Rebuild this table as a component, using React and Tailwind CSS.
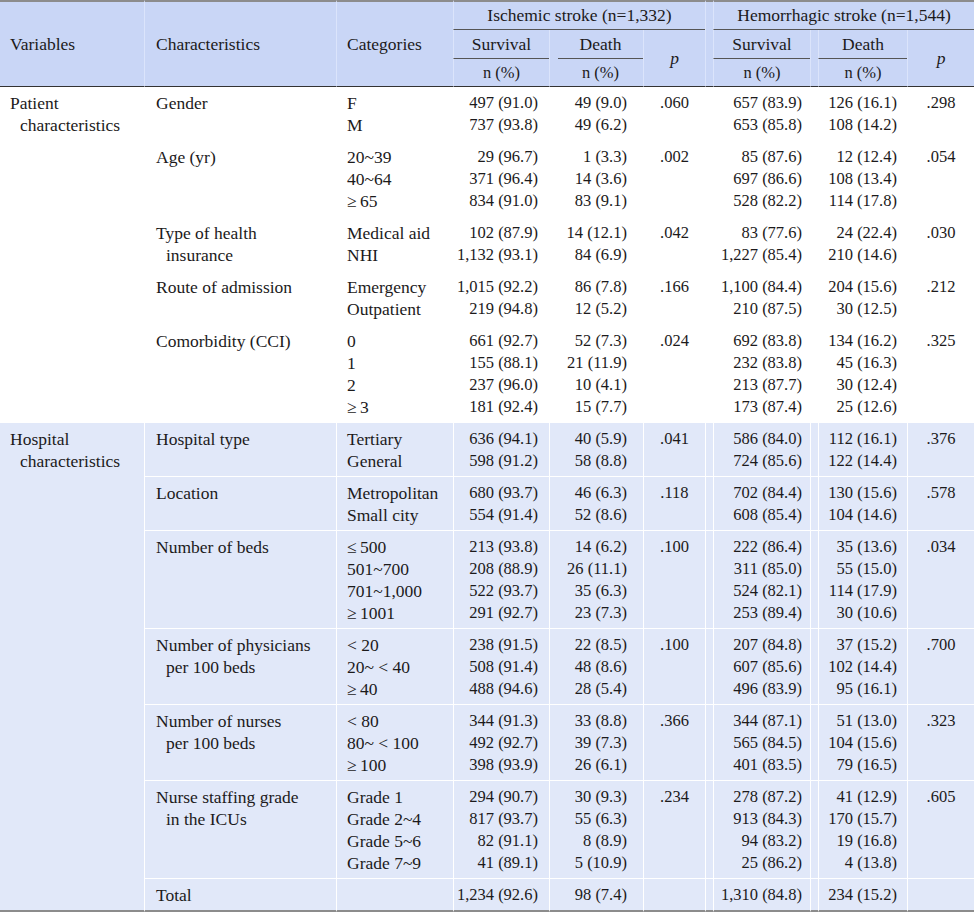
const patient = [
  { label: ["Gender"], cats: ["F", "M"], is: ["497 (91.0)", "737 (93.8)"], id: ["49 (9.0)", "49 (6.2)"], ip: ".060", hs: ["657 (83.9)", "653 (85.8)"], hd: ["126 (16.1)", "108 (14.2)"], hp: ".298" },
  { label: ["Age (yr)"], cats: ["20~39", "40~64", "≥\u200965"], is: ["29 (96.7)", "371 (96.4)", "834 (91.0)"], id: ["1 (3.3)", "14 (3.6)", "83 (9.1)"], ip: ".002", hs: ["85 (87.6)", "697 (86.6)", "528 (82.2)"], hd: ["12 (12.4)", "108 (13.4)", "114 (17.8)"], hp: ".054" },
  { label: ["Type of health", "insurance"], cats: ["Medical aid", "NHI"], is: ["102 (87.9)", "1,132 (93.1)"], id: ["14 (12.1)", "84 (6.9)"], ip: ".042", hs: ["83 (77.6)", "1,227 (85.4)"], hd: ["24 (22.4)", "210 (14.6)"], hp: ".030" },
  { label: ["Route of admission"], cats: ["Emergency", "Outpatient"], is: ["1,015 (92.2)", "219 (94.8)"], id: ["86 (7.8)", "12 (5.2)"], ip: ".166", hs: ["1,100 (84.4)", "210 (87.5)"], hd: ["204 (15.6)", "30 (12.5)"], hp: ".212" },
  { label: ["Comorbidity (CCI)"], cats: ["0", "1", "2", "≥\u20093"], is: ["661 (92.7)", "155 (88.1)", "237 (96.0)", "181 (92.4)"], id: ["52 (7.3)", "21 (11.9)", "10 (4.1)", "15 (7.7)"], ip: ".024", hs: ["692 (83.8)", "232 (83.8)", "213 (87.7)", "173 (87.4)"], hd: ["134 (16.2)", "45 (16.3)", "30 (12.4)", "25 (12.6)"], hp: ".325" },
];

const hospital = [
  { label: ["Hospital type"], cats: ["Tertiary", "General"], is: ["636 (94.1)", "598 (91.2)"], id: ["40 (5.9)", "58 (8.8)"], ip: ".041", hs: ["586 (84.0)", "724 (85.6)"], hd: ["112 (16.1)", "122 (14.4)"], hp: ".376" },
  { label: ["Location"], cats: ["Metropolitan", "Small city"], is: ["680 (93.7)", "554 (91.4)"], id: ["46 (6.3)", "52 (8.6)"], ip: ".118", hs: ["702 (84.4)", "608 (85.4)"], hd: ["130 (15.6)", "104 (14.6)"], hp: ".578" },
  { label: ["Number of beds"], cats: ["≤\u2009500", "501~700", "701~1,000", "≥\u20091001"], is: ["213 (93.8)", "208 (88.9)", "522 (93.7)", "291 (92.7)"], id: ["14 (6.2)", "26 (11.1)", "35 (6.3)", "23 (7.3)"], ip: ".100", hs: ["222 (86.4)", "311 (85.0)", "524 (82.1)", "253 (89.4)"], hd: ["35 (13.6)", "55 (15.0)", "114 (17.9)", "30 (10.6)"], hp: ".034" },
  { label: ["Number of physicians", "per 100 beds"], cats: ["< 20", "20~ < 40", "≥\u200940"], is: ["238 (91.5)", "508 (91.4)", "488 (94.6)"], id: ["22 (8.5)", "48 (8.6)", "28 (5.4)"], ip: ".100", hs: ["207 (84.8)", "607 (85.6)", "496 (83.9)"], hd: ["37 (15.2)", "102 (14.4)", "95 (16.1)"], hp: ".700" },
  { label: ["Number of nurses", "per 100 beds"], cats: ["< 80", "80~ < 100", "≥\u2009100"], is: ["344 (91.3)", "492 (92.7)", "398 (93.9)"], id: ["33 (8.8)", "39 (7.3)", "26 (6.1)"], ip: ".366", hs: ["344 (87.1)", "565 (84.5)", "401 (83.5)"], hd: ["51 (13.0)", "104 (15.6)", "79 (16.5)"], hp: ".323" },
  { label: ["Nurse staffing grade", "in the ICUs"], cats: ["Grade 1", "Grade 2~4", "Grade 5~6", "Grade 7~9"], is: ["294 (90.7)", "817 (93.7)", "82 (91.1)", "41 (89.1)"], id: ["30 (9.3)", "55 (6.3)", "8 (8.9)", "5 (10.9)"], ip: ".234", hs: ["278 (87.2)", "913 (84.3)", "94 (83.2)", "25 (86.2)"], hd: ["41 (12.9)", "170 (15.7)", "19 (16.8)", "4 (13.8)"], hp: ".605" },
  { label: ["Total"], cats: [], is: ["1,234 (92.6)"], id: ["98 (7.4)"], ip: "", hs: ["1,310 (84.8)"], hd: ["234 (15.2)"], hp: "" },
];

function Lines({ items, indent }) {
  return items.map((t, i) => (
    <div key={i} className={i > 0 && indent ? "pl-[10px]" : ""}>
      {t}
    </div>
  ));
}

function GroupRow({ g, first, section, rows, last, closing }) {
  const b = last
    ? "border-b-2 border-b-[#8c8c8c] pb-[4px]"
    : "border-b border-b-white pb-[4px]";
  const cell = `align-top pt-[5px] border-l border-l-white ${b}`;
  const num = `${cell} text-right text-[16.5px]`;
  return (
    <tr>
      {first && (
        <td
          rowSpan={rows}
          className={`align-top pt-[5px] pl-[10px] ${
            closing ? "border-b-2 border-b-[#8c8c8c]" : "border-b border-b-white"
          }`}
        >
          <Lines items={section} indent />
        </td>
      )}
      <td className={`${cell} pl-[11px]`}>
        <Lines items={g.label} indent />
      </td>
      <td className={`${cell} pl-[10px]`}>
        <Lines items={g.cats} />
      </td>
      <td className={`${num} pr-[11px]`}>
        <Lines items={g.is} />
      </td>
      <td className={`${num} pr-[16px]`}>
        <Lines items={g.id} />
      </td>
      <td className={`${cell} text-center text-[16.5px]`}>{g.ip}</td>
      <td className={cell}></td>
      <td className={`${num} pr-[8px]`}>
        <Lines items={g.hs} />
      </td>
      <td className={cell}></td>
      <td className={`${num} pr-[10px]`}>
        <Lines items={g.hd} />
      </td>
      <td className={`${cell} text-center text-[16.5px]`}>{g.hp}</td>
    </tr>
  );
}

export default function App() {
  const hl = "border-l border-l-[#dbe4fb]";
  const top = "border-t-2 border-t-[#8c8c8c]";
  const bot = "border-b border-b-[#333333]";
  const mid = "border-b border-b-[#555555]";

  return (
    <div className="w-[974px] bg-white text-[#1c1a1b] font-['Liberation_Serif',serif] text-[17.5px] leading-[22px]">
      <table className="w-[974px] table-fixed border-separate border-spacing-0">
        <colgroup>
          <col className="w-[144px]" />
          <col className="w-[192px]" />
          <col className="w-[117px]" />
          <col className="w-[96px]" />
          <col className="w-[94px]" />
          <col className="w-[62px]" />
          <col className="w-[8px]" />
          <col className="w-[97px]" />
          <col className="w-[8px]" />
          <col className="w-[89px]" />
          <col className="w-[67px]" />
        </colgroup>
        <thead className="bg-[#c9d6f6]">
          <tr>
            <th rowSpan={3} className={`${top} ${bot} text-left font-normal pl-[10px] align-middle`}>
              Variables
            </th>
            <th rowSpan={3} className={`${top} ${bot} ${hl} text-left font-normal pl-[11px] align-middle`}>
              Characteristics
            </th>
            <th rowSpan={3} className={`${top} ${bot} ${hl} text-left font-normal pl-[10px] align-middle`}>
              Categories
            </th>
            <th colSpan={3} className={`${top} ${mid} ${hl} font-normal text-center leading-[27px]`}>
              Ischemic stroke (n=1,332)
            </th>
            <th rowSpan={3} className={`${top} ${bot} ${hl}`}></th>
            <th colSpan={4} className={`${top} ${mid} ${hl} font-normal text-center leading-[27px]`}>
              Hemorrhagic stroke (n=1,544)
            </th>
          </tr>
          <tr>
            <th className={`${hl} ${mid} font-normal text-center leading-[28px]`}>Survival</th>
            <th className={`${hl} font-normal p-0`}>
              <div className={`ml-[8px] ${mid} text-center leading-[28px]`}>Death</div>
            </th>
            <th rowSpan={2} className={`${hl} ${bot} font-normal italic text-center align-middle`}>
              p
            </th>
            <th className={`${hl} ${mid} font-normal text-center leading-[28px]`}>Survival</th>
            <th rowSpan={2} className={`${hl} ${bot}`}></th>
            <th className={`${hl} ${mid} font-normal text-center leading-[28px]`}>Death</th>
            <th rowSpan={2} className={`${hl} ${bot} font-normal italic text-center align-middle`}>
              p
            </th>
          </tr>
          <tr>
            <th className={`${hl} ${bot} font-normal text-center leading-[27px] text-[16.5px]`}>n (%)</th>
            <th className={`${hl} ${bot} font-normal text-center leading-[27px] text-[16.5px] pl-[8px]`}>n (%)</th>
            <th className={`${hl} ${bot} font-normal text-center leading-[27px] text-[16.5px]`}>n (%)</th>
            <th className={`${hl} ${bot} font-normal text-center leading-[27px] text-[16.5px]`}>n (%)</th>
          </tr>
        </thead>
        <tbody>
          {patient.map((g, i) => (
            <GroupRow
              key={i}
              g={g}
              first={i === 0}
              rows={patient.length}
              section={["Patient", "characteristics"]}
            />
          ))}
        </tbody>
        <tbody className="bg-[#e1e8f9]">
          {hospital.map((g, i) => (
            <GroupRow
              key={i}
              g={g}
              first={i === 0}
              rows={hospital.length}
              last={i === hospital.length - 1}
              closing
              section={["Hospital", "characteristics"]}
            />
          ))}
        </tbody>
      </table>
    </div>
  );
}
